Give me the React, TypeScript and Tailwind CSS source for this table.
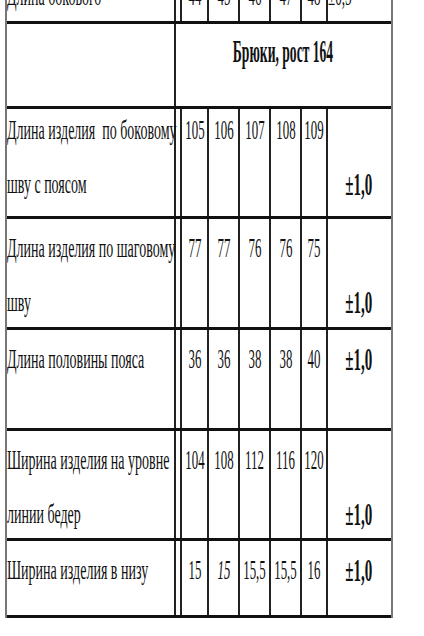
import React from "react";

const serif = { fontFamily: '"Liberation Serif", "Times New Roman", serif' };

type RowProps = {
  label: string[];
  values: string[];
  tol: string;
  tolLine2?: boolean;
  h: string;
  off: string;
  top?: boolean;
  last?: boolean;
  italicIdx?: number;
  tolRegularLeft?: boolean;
};

function Row({ label, values, tol, tolLine2, h, off, top, last, italicIdx, tolRegularLeft }: RowProps) {
  const widths = ["w-[27px]", "w-[31px]", "w-[31px]", "w-[31px]", "w-[26px]"];
  return (
    <div
      className={
        "flex overflow-hidden " +
        h +
        (top ? "" : " border-t-[3px] border-[#111]") +
        (last ? " border-b-[3px]" : "")
      }
    >
      <div className="w-[169px] shrink-0 border-r-2 border-[#222]">
        <div className={off}>
          {label.map((l, i) => (
            <div key={i} className="origin-left scale-x-[0.5] whitespace-pre text-[28px] leading-[54px]">
              {l}
            </div>
          ))}
        </div>
      </div>
      <div className="w-[4px] shrink-0" />
      {values.map((v, i) => (
        <div key={i} className={widths[i] + " shrink-0 min-w-0 border-l-2 border-[#222] flex justify-center"}>
          <div className={off}>
            <span
              className={
                "inline-block whitespace-nowrap scale-x-[0.46] text-[28px] leading-[54px]" +
                (italicIdx === i ? " italic" : "")
              }
            >
              {v}
            </span>
          </div>
        </div>
      ))}
      <div
        className={
          "w-[63px] shrink-0 min-w-0 border-l-2 border-[#222] flex " +
          (tolRegularLeft ? "justify-start" : "justify-center")
        }
      >
        <div className={off}>
          {tolLine2 && <div className="h-[54px]" />}
          {tolRegularLeft ? (
            <span className="block origin-left scale-x-[0.47] whitespace-nowrap text-[28px] leading-[54px]">{tol}</span>
          ) : (
            <span className="inline-block whitespace-nowrap scale-x-[0.47] text-[32px] font-bold leading-[54px]">
              {tol}
            </span>
          )}
        </div>
      </div>
    </div>
  );
}

export default function App() {
  return (
    <div className="w-[424px] h-[636px] bg-white overflow-hidden text-[#111]" style={serif}>
      <div className="ml-[5px] w-[388px] border-l-2 border-r-2 border-[#777]">
        <Row
          top
          h="h-[21px]"
          off="mt-[-31px]"
          label={["Длина бокового"]}
          values={["44", "45", "46", "47", "48"]}
          tol="±0,5"
          tolRegularLeft
        />
        <div className="flex h-[85px] overflow-hidden border-t-[3px] border-[#111]">
          <div className="w-[169px] shrink-0 border-r-2 border-[#222]" />
          <div className="w-[213px] shrink-0 min-w-0 flex justify-center">
            <div className="mt-[0px] shrink-0">
              <span className="inline-block whitespace-nowrap scale-x-[0.425] text-[32px] font-bold leading-[54px]">
                Брюки, рост 164
              </span>
            </div>
          </div>
        </div>
        <Row
          h="h-[110px]"
          off="mt-[-6px]"
          label={["Длина изделия  по боковому", "шву с поясом"]}
          values={["105", "106", "107", "108", "109"]}
          tol="±1,0"
          tolLine2
        />
        <Row
          h="h-[111px]"
          off="mt-[2px]"
          label={["Длина изделия по шаговому", "шву"]}
          values={["77", "77", "76", "76", "75"]}
          tol="±1,0"
          tolLine2
        />
        <Row
          h="h-[101px]"
          off="mt-[2px]"
          label={["Длина половины пояса"]}
          values={["36", "36", "38", "38", "40"]}
          tol="±1,0"
        />
        <Row
          h="h-[110px]"
          off="mt-[2px]"
          label={["Ширина изделия на уровне", "линии бедер"]}
          values={["104", "108", "112", "116", "120"]}
          tol="±1,0"
          tolLine2
        />
        <Row
          h="h-[80px]"
          off="mt-[2px]"
          last
          label={["Ширина изделия в низу"]}
          values={["15", "15", "15,5", "15,5", "16"]}
          italicIdx={1}
          tol="±1,0"
        />
      </div>
    </div>
  );
}
